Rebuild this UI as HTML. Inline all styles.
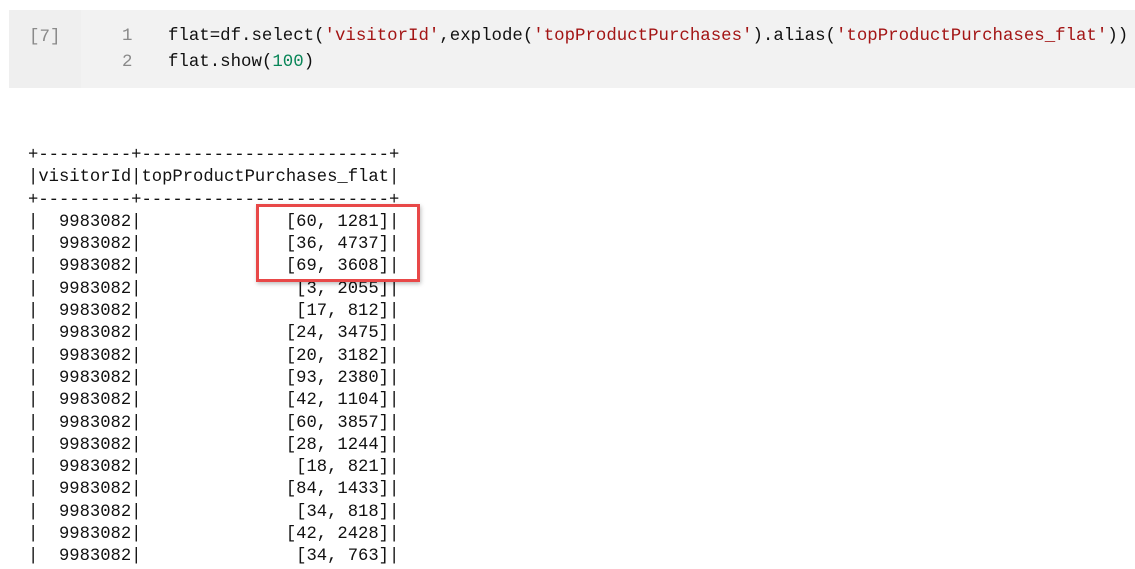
<!DOCTYPE html>
<html><head><style>
body{margin:0;width:1135px;height:552px;background:#fff;overflow:hidden;position:relative;font-family:"Liberation Mono",monospace}
.cell{position:absolute;left:9px;top:10px;width:1126px;height:78px;background:#f2f2f2}
.gut{position:absolute;left:0;top:0;width:72px;height:78px;background:#efefef}
.num{position:absolute;left:20px;top:17px;font-size:17.5px;color:#8a8a8a}
.ln{position:absolute;left:113px;font-size:17.4px;color:#8a8a8a}
.code{position:absolute;left:159px;font-size:17.4px;color:#111;white-space:pre}
.s{color:#a31515}.n{color:#098658}
pre{position:absolute;left:28px;top:145px;margin:0;font-family:"Liberation Mono",monospace;font-size:17.2px;line-height:22.3px;color:#111}
.box{position:absolute;left:256px;top:204px;width:158px;height:72px;border:3px solid #e84848;box-shadow:1px 2px 4px rgba(0,0,0,.25)}
</style></head><body>
<div class="cell"><div class="gut"></div>
<div class="num">[7]</div>
<div class="ln" style="top:17px">1</div><div class="ln" style="top:43px">2</div>
<div class="code" style="top:17px">flat=df.select(<span class="s">'visitorId'</span>,explode(<span class="s">'topProductPurchases'</span>).alias(<span class="s">'topProductPurchases_flat'</span>))</div>
<div class="code" style="top:43px">flat.show(<span class="n">100</span>)</div>
</div>
<pre>+---------+------------------------+
|visitorId|topProductPurchases_flat|
+---------+------------------------+
|  9983082|              [60, 1281]|
|  9983082|              [36, 4737]|
|  9983082|              [69, 3608]|
|  9983082|               [3, 2055]|
|  9983082|               [17, 812]|
|  9983082|              [24, 3475]|
|  9983082|              [20, 3182]|
|  9983082|              [93, 2380]|
|  9983082|              [42, 1104]|
|  9983082|              [60, 3857]|
|  9983082|              [28, 1244]|
|  9983082|               [18, 821]|
|  9983082|              [84, 1433]|
|  9983082|               [34, 818]|
|  9983082|              [42, 2428]|
|  9983082|               [34, 763]|</pre>
<div class="box"></div>
</body></html>
